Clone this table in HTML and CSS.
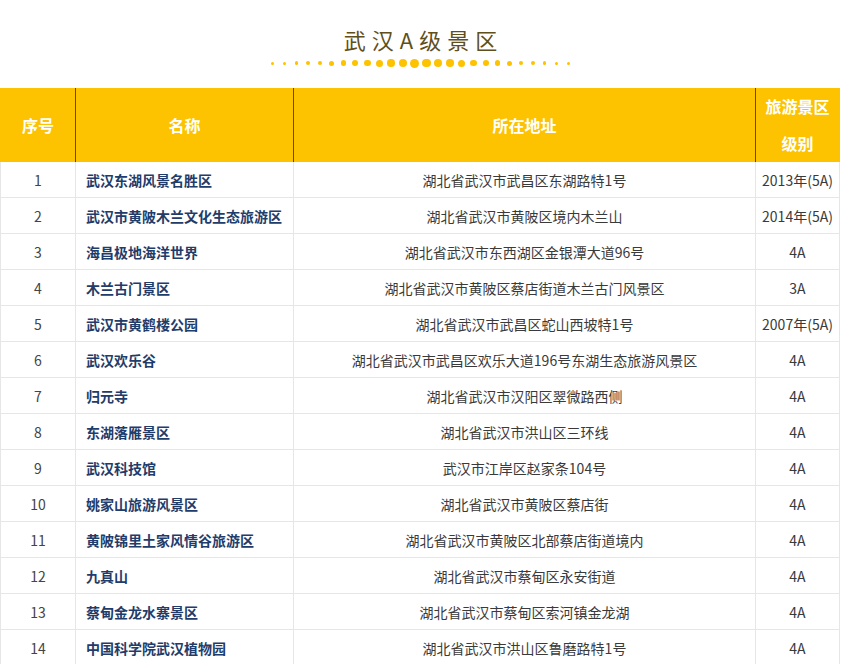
FILE: index.html
```html
<!DOCTYPE html>
<html lang="zh-CN">
<head>
<meta charset="utf-8">
<title>武汉A级景区</title>
<link rel="stylesheet" href="styles.css">
</head>
<body>
<div class="page">
  <header class="title-block">
    <h1 class="title">武汉A级景区</h1>
    <div class="dots">
      <i class="s30"></i><i class="s30"></i><i class="s35"></i><i class="s40"></i><i class="s45"></i><i class="s50"></i><i class="s55"></i><i class="s60"></i><i class="s65"></i><i class="s70"></i><i class="s75"></i><i class="s80"></i><i class="s90"></i><i class="s85"></i><i class="s80"></i><i class="s75"></i><i class="s70"></i><i class="s65"></i><i class="s60"></i><i class="s55"></i><i class="s50"></i><i class="s45"></i><i class="s40"></i><i class="s35"></i><i class="s30"></i><i class="s30"></i>
    </div>
  </header>
  <table class="scenic">
    <colgroup>
      <col class="c-no"><col class="c-name"><col class="c-addr"><col class="c-level">
    </colgroup>
    <thead>
      <tr><th>序号</th><th>名称</th><th>所在地址</th><th class="level-head">旅游景区<br>级别</th></tr>
    </thead>
    <tbody>
      <tr><td>1</td><td class="name">武汉东湖风景名胜区</td><td>湖北省武汉市武昌区东湖路特1号</td><td>2013年(5A)</td></tr>
      <tr><td>2</td><td class="name">武汉市黄陂木兰文化生态旅游区</td><td>湖北省武汉市黄陂区境内木兰山</td><td>2014年(5A)</td></tr>
      <tr><td>3</td><td class="name">海昌极地海洋世界</td><td>湖北省武汉市东西湖区金银潭大道96号</td><td>4A</td></tr>
      <tr><td>4</td><td class="name">木兰古门景区</td><td>湖北省武汉市黄陂区蔡店街道木兰古门风景区</td><td>3A</td></tr>
      <tr><td>5</td><td class="name">武汉市黄鹤楼公园</td><td>湖北省武汉市武昌区蛇山西坡特1号</td><td>2007年(5A)</td></tr>
      <tr><td>6</td><td class="name">武汉欢乐谷</td><td>湖北省武汉市武昌区欢乐大道196号东湖生态旅游风景区</td><td>4A</td></tr>
      <tr><td>7</td><td class="name">归元寺</td><td>湖北省武汉市汉阳区翠微路西侧</td><td>4A</td></tr>
      <tr><td>8</td><td class="name">东湖落雁景区</td><td>湖北省武汉市洪山区三环线</td><td>4A</td></tr>
      <tr><td>9</td><td class="name">武汉科技馆</td><td>武汉市江岸区赵家条104号</td><td>4A</td></tr>
      <tr><td>10</td><td class="name">姚家山旅游风景区</td><td>湖北省武汉市黄陂区蔡店街</td><td>4A</td></tr>
      <tr><td>11</td><td class="name">黄陂锦里土家风情谷旅游区</td><td>湖北省武汉市黄陂区北部蔡店街道境内</td><td>4A</td></tr>
      <tr><td>12</td><td class="name">九真山</td><td>湖北省武汉市蔡甸区永安街道</td><td>4A</td></tr>
      <tr><td>13</td><td class="name">蔡甸金龙水寨景区</td><td>湖北省武汉市蔡甸区索河镇金龙湖</td><td>4A</td></tr>
      <tr><td>14</td><td class="name">中国科学院武汉植物园</td><td>湖北省武汉市洪山区鲁磨路特1号</td><td>4A</td></tr>
    </tbody>
  </table>
</div>
</body>
</html>
```
FILE: styles.css
```css
html, body {
  margin: 0;
  padding: 0;
  background: #ffffff;
}

body {
  font-family: "Noto Sans CJK SC", "Noto Sans", sans-serif;
  color: #333333;
}

.page {
  width: 841px;
}

.title-block {
  padding-top: 25px;
  height: 63px;
  display: flex;
  flex-direction: column;
  align-items: center;
}

.title {
  margin: 0;
  padding-left: 6px;
  font-size: 22px;
  line-height: 29px;
  font-weight: normal;
  letter-spacing: 6px;
  color: #5f4f1c;
}

.dots {
  margin-top: 4px;
  height: 10px;
  display: flex;
  align-items: center;
  justify-content: center;
}

.dots > i {
  width: 11.83px;
  height: 10px;
  display: flex;
  align-items: center;
  justify-content: center;
}

.dots > i::before {
  content: "";
  width: var(--s);
  height: var(--s);
  border-radius: 50%;
  background: #fdc300;
}

.s30 { --s: 3px; }
.s35 { --s: 3.5px; }
.s40 { --s: 4px; }
.s45 { --s: 4.5px; }
.s50 { --s: 5px; }
.s55 { --s: 5.5px; }
.s60 { --s: 6px; }
.s65 { --s: 6.5px; }
.s70 { --s: 7px; }
.s75 { --s: 7.5px; }
.s80 { --s: 8px; }
.s85 { --s: 8.5px; }
.s90 { --s: 9px; }

.scenic {
  border-collapse: separate;
  border-spacing: 0;
  table-layout: fixed;
  width: 840px;
}

.c-no { width: 76px; }
.c-name { width: 218px; }
.c-addr { width: 462px; }
.c-level { width: 84px; }

.scenic th {
  background: #fdc300;
  color: #ffffff;
  font-size: 16px;
  font-weight: bold;
  line-height: 37px;
  height: 74px;
  padding: 0;
  text-align: center;
  vertical-align: middle;
  border-right: 1px solid #4b4b4b;
}

.scenic th:first-child {
  border-left: 1px solid #fdc300;
}

.scenic th:last-child {
  border-right: 1px solid #fdc300;
}

.level-head {
  white-space: nowrap;
}

.scenic td {
  height: 35px;
  padding: 0;
  font-size: 14px;
  line-height: 20px;
  text-align: center;
  vertical-align: middle;
  color: #3a3a3a;
  border-right: 1px solid #e6e6e6;
  border-bottom: 1px solid #e6e6e6;
  white-space: nowrap;
}

.scenic td:first-child {
  border-left: 1px solid #e6e6e6;
  color: #444444;
}

.scenic td.name {
  text-align: left;
  padding-left: 10px;
  font-weight: bold;
  color: #1f3c6a;
}
```
